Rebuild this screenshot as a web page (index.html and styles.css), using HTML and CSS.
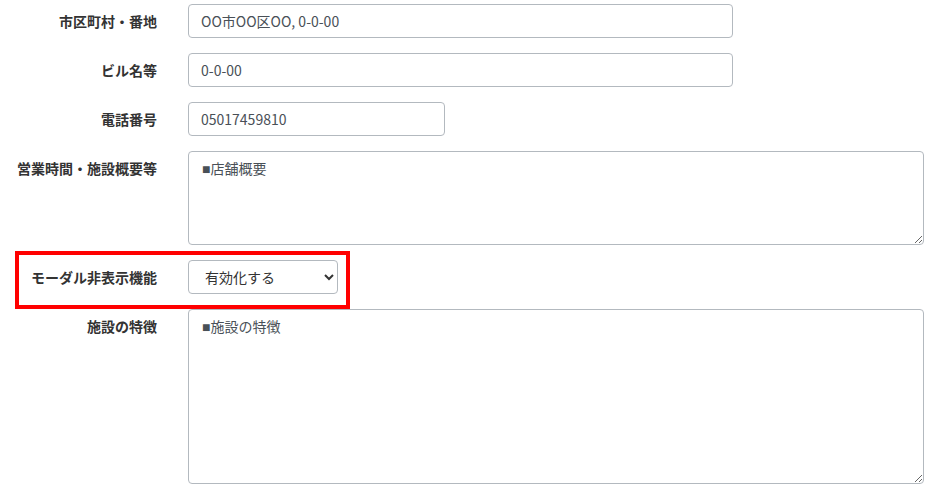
FILE: index.html
```html
<!DOCTYPE html>
<html lang="ja">
<head>
<meta charset="utf-8">
<link rel="stylesheet" href="styles.css">
</head>
<body>
<form class="form">
  <div class="row">
    <label class="label">市区町村・番地</label>
    <input class="control w-wide" type="text" value="OO市OO区OO, 0-0-00">
  </div>
  <div class="row">
    <label class="label">ビル名等</label>
    <input class="control w-wide" type="text" value="0-0-00">
  </div>
  <div class="row">
    <label class="label">電話番号</label>
    <input class="control w-short" type="text" value="05017459810">
  </div>
  <div class="row">
    <label class="label">営業時間・施設概要等</label>
    <textarea class="control area area-sm">■店舗概要</textarea>
  </div>
  <div class="row highlight">
    <label class="label">モーダル非表示機能</label>
    <select class="control select">
      <option>有効化する</option>
      <option>無効化する</option>
    </select>
  </div>
  <div class="row">
    <label class="label">施設の特徴</label>
    <textarea class="control area area-lg">■施設の特徴</textarea>
  </div>
</form>
</body>
</html>
```
FILE: styles.css
```css
html, body {
  margin: 0;
  padding: 0;
  background: #fff;
}
body {
  font-family: "Noto Sans CJK JP", "Noto Sans", sans-serif;
  color: #333;
  overflow: hidden;
}
.form {
  padding-top: 4px;
}
.row {
  display: grid;
  grid-template-columns: 157px auto;
  column-gap: 31px;
  align-items: start;
  justify-content: start;
  margin-bottom: 15px;
}
.label {
  text-align: right;
  font-size: 14px;
  font-weight: bold;
  line-height: 20px;
  padding-top: 7px;
  color: #333;
  white-space: nowrap;
}
.control {
  box-sizing: border-box;
  height: 34px;
  margin: 0;
  padding: 0 12px;
  border: 1px solid #b3b9bf;
  border-radius: 4px;
  background: #fff;
  font-family: "Noto Sans CJK JP", "Noto Sans", sans-serif;
  font-size: 14px;
  color: #495057;
  outline: none;
}
.w-wide { width: 545px; }
.w-short { width: 257px; }
.area {
  width: 736px;
  padding: 7px 13px;
  line-height: 20px;
  resize: vertical;
  display: block;
  font-family: "Liberation Sans", "Noto Sans CJK JP", sans-serif;
}
.area-sm { height: 94px; }
.area-lg { height: 175px; }
.select {
  width: 150px;
  padding-left: 12px;
  color: #333;
}
.highlight {
  position: relative;
}
.highlight::after {
  content: "";
  position: absolute;
  left: 15px;
  top: -9px;
  width: 335px;
  height: 58px;
  box-sizing: border-box;
  border: 4px solid #ff0000;
  pointer-events: none;
}
```
